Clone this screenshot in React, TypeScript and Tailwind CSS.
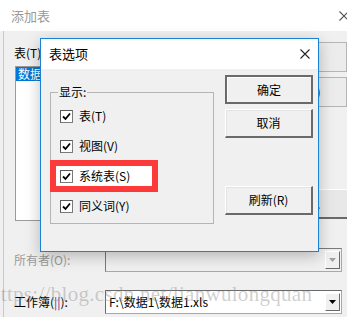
import React from 'react'

const font = { fontFamily: '"Microsoft YaHei", "Noto Sans CJK SC", "Noto Sans", sans-serif' }

function CloseIcon({ className }: { className?: string }) {
  return (
    <svg className={className} viewBox="0 0 10 10" width="10" height="10">
      <path d="M0.5 0.5 L9.5 9.5 M9.5 0.5 L0.5 9.5" stroke="currentColor" strokeWidth="1.1" fill="none" />
    </svg>
  )
}

function Check({ label }: { label: string }) {
  return (
    <div className="flex items-center gap-[6px] h-[16px]">
      <div className="w-[13px] h-[13px] bg-white border border-[#7a7a7a] border-t-[#5a5a5a] border-l-[#5a5a5a] flex items-center justify-center">
        <svg viewBox="0 0 9 9" width="9" height="9">
          <path d="M1 4.5 L3.5 7 L8 1.5" stroke="#000" strokeWidth="1.8" fill="none" />
        </svg>
      </div>
      <span className="text-[12px] text-black leading-none">{label}</span>
    </div>
  )
}

function Btn({ label, primary }: { label: string; primary?: boolean }) {
  return (
    <div
      className={
        'w-[88px] h-[29px] flex items-center justify-center text-[12px] text-black bg-[#f0f0f0] ' +
        (primary
          ? 'border-2 border-[#6a6a6a] shadow-[inset_1px_1px_0_#fff]'
          : 'border-t border-l border-[#fff] border-r-2 border-b-2 border-r-[#6a6a6a] border-b-[#6a6a6a] shadow-[inset_1px_1px_0_#e3e3e3]')
      }
    >
      {label}
    </div>
  )
}

function Combo({ disabled, text }: { disabled?: boolean; text?: string }) {
  return (
    <div
      className={
        'w-[237px] h-[24px] border border-[#a8a8a8] flex items-center justify-between pl-[3px] pr-[1px] ' +
        (disabled ? 'bg-[#f0f0f0] border-t-[#7a7a7a] border-l-[#7a7a7a]' : 'bg-white border-t-[#6a6a6a] border-l-[#6a6a6a]')
      }
    >
      <span className="text-[12px] text-black leading-none">{text}</span>
      <div className="w-[15px] h-[18px] bg-[#f0f0f0] border border-[#fff] border-r-[#6a6a6a] border-b-[#6a6a6a] flex items-center justify-center">
        <svg viewBox="0 0 7 4" width="7" height="4">
          <path d="M0 0 H7 L3.5 4 Z" fill={disabled ? '#a0a0a0' : '#000'} />
        </svg>
      </div>
    </div>
  )
}

export default function App() {
  return (
    <div className="relative w-[347px] h-[317px] overflow-hidden bg-[#f0f0f0]" style={font}>
      {/* outer dialog title */}
      <div className="h-[31px] bg-white flex items-center justify-between pl-[11px]">
        <span className="text-[13px] text-[#9a9a9a]">添加表</span>
        <CloseIcon className="text-[#555] mr-[-2px]" />
      </div>

      {/* outer dialog body */}
      <div className="h-[286px] ml-[3px] border-l border-[#c8c8c8] pl-[10px] pt-[14px]">
        <div className="text-[12px] leading-[16px] text-black">表(T)</div>
        <div className="flex mt-[5px]">
          <div className="ml-[1px] w-[290px] h-[155px] bg-white border border-[#9a9a9a]">
            <div className="w-[60px] h-[14px] bg-[#0078d7] text-white text-[12px] leading-[14px] pl-[2px]">数据</div>
          </div>
          <div className="ml-[13px] flex flex-col">
            <div className="w-[40px] h-[30px] mt-[-24px] bg-[#ececec] border border-[#b5b5b5] text-[12px] text-[#6a0dad] flex items-center pl-[2px]">)</div>
            <div className="w-[40px] h-[30px] mt-[5px] bg-[#ececec] border border-[#b5b5b5] text-[12px] text-[#6a0dad] flex items-center pl-[1px]">C)</div>
            <div className="w-[40px] h-[30px] mt-[82px] bg-[#e8e8e8] border-t border-[#fff] border-b-2 border-b-[#6a6a6a] text-[12px] text-black flex items-center">l...</div>
          </div>
        </div>

        <div className="flex items-center mt-[27px] h-[24px]">
          <span className="w-[91px] text-[12px] text-[#9a9a9a]">所有者(O):</span>
          <Combo disabled />
        </div>
        <div className="flex items-center mt-[18px] h-[24px]">
          <span className="w-[91px] text-[12px] text-black">工作簿(<span className="text-[#6a2a8a]">||</span>):</span>
          <Combo text="F:\数据1\数据1.xls" />
        </div>
      </div>

      {/* inner dialog */}
      <div className="absolute left-[40px] top-[38px] w-[279px] h-[214px] border border-[#1a82d6] bg-[#f0f0f0] shadow-[0_4px_14px_rgba(0,0,0,0.25)]">
        <div className="h-[30px] bg-white flex items-center justify-between pl-[8px] pr-[8px]">
          <span className="text-[13px] text-black">表选项</span>
          <CloseIcon className="text-[#222]" />
        </div>
        <div className="flex pl-[9px] pt-[23px]">
          <div className="relative w-[164px] h-[132px] border border-[#b5b5b5]">
            <span className="absolute left-[7px] top-[-9px] bg-[#f0f0f0] px-[1px] text-[12px] leading-[16px] text-black">显示:</span>
            <div className="flex flex-col gap-[14px] pl-[9px] pt-[15px]">
              <Check label="表(T)" />
              <Check label="视图(V)" />
              <div className="relative">
                <div className="absolute left-[-10px] top-[-8px] w-[108px] h-[32px] border-[6px] border-[#fc3a3a] bg-white" />
                <div className="relative">
                  <Check label="系统表(S)" />
                </div>
              </div>
              <Check label="同义词(Y)" />
            </div>
          </div>
          <div className="ml-[11px] mt-[-17px] flex flex-col">
            <Btn label="确定" primary />
            <div className="mt-[5px]">
              <Btn label="取消" />
            </div>
            <div className="mt-[48px]">
              <Btn label="刷新(R)" />
            </div>
          </div>
        </div>
      </div>

      {/* watermark */}
      <div
        className="absolute left-[-10px] top-[284px] text-[21px] tracking-[0.3px] leading-none text-[rgba(140,140,140,0.42)] whitespace-nowrap pointer-events-none"
        style={{ fontFamily: '"Liberation Serif", serif' }}
      >
        https://blog.csdn.net/lianwulongquan
      </div>
    </div>
  )
}
